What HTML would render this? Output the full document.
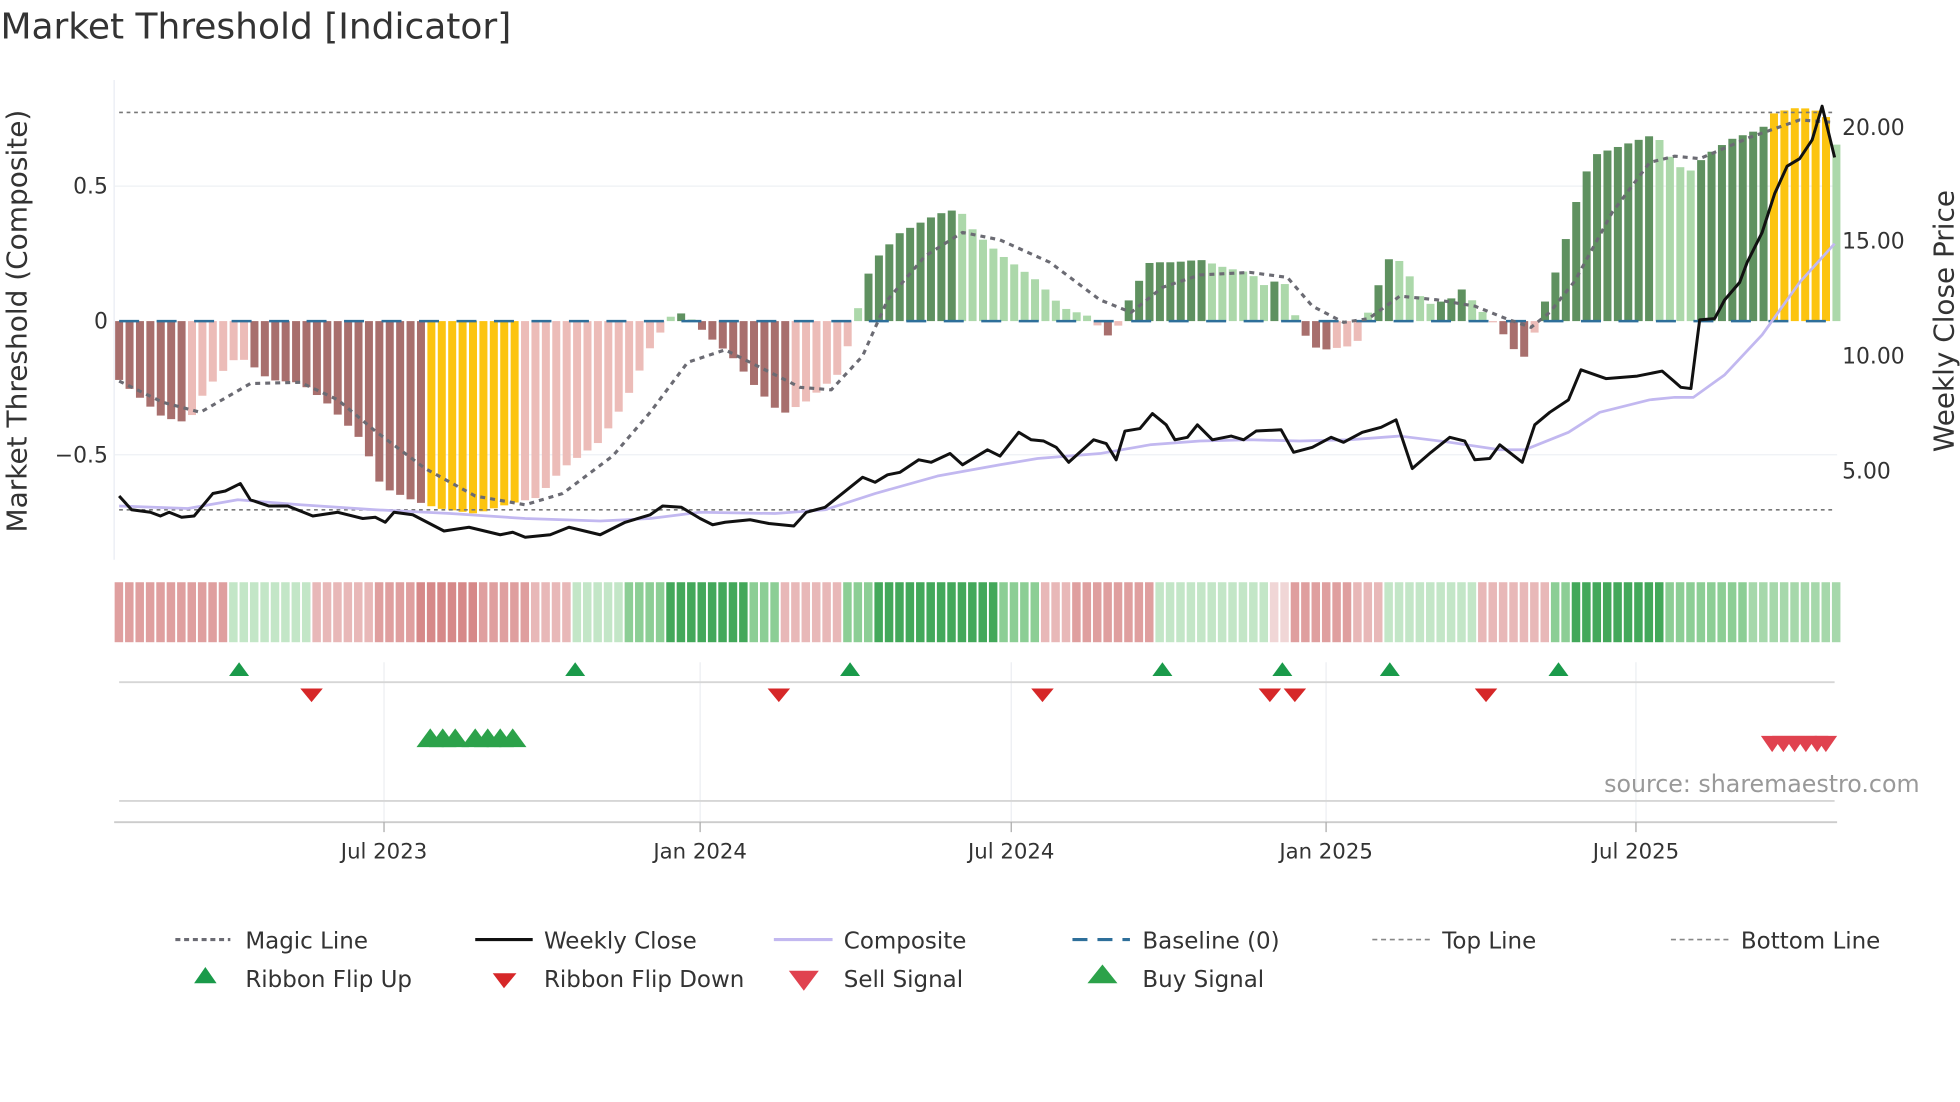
<!DOCTYPE html>
<html><head><meta charset="utf-8"><style>
html,body{margin:0;padding:0;background:#fff;}
svg{display:block;font-family:"DejaVu Sans","Liberation Sans",sans-serif;}
</style></head><body>
<svg id="s" width="1960" height="1102" viewBox="0 0 1568 882" xmlns="http://www.w3.org/2000/svg">
<rect width="1568" height="882" fill="#fff"/>
<text x="0" y="31" font-size="28.8" fill="#333">Market Threshold [Indicator]</text>
<line x1="91" y1="64" x2="91" y2="448" stroke="#e8ecf3" stroke-width="1"/>
<line x1="91" y1="149" x2="1470" y2="149" stroke="#eef0f4"/>
<line x1="91" y1="364" x2="1470" y2="364" stroke="#eef0f4"/>
<g id="bars"></g>
<line x1="95" y1="90" x2="1468" y2="90" stroke="#777" stroke-width="1.3" stroke-dasharray="3,3"/>
<line x1="95" y1="408" x2="1468" y2="408" stroke="#777" stroke-width="1.3" stroke-dasharray="3,3"/>
<line x1="95" y1="257" x2="1468" y2="257" stroke="#2e6f9a" stroke-width="2" stroke-dasharray="16,14"/>
<g id="lines"></g>
<g font-size="17.5" fill="#333">
<text x="86" y="155" text-anchor="end">0.5</text>
<text x="86" y="263" text-anchor="end">0</text>
<text x="86" y="370" text-anchor="end">−0.5</text>
<text x="1474" y="108">20.00</text>
<text x="1474" y="199">15.00</text>
<text x="1474" y="291">10.00</text>
<text x="1474" y="383">5.00</text>
</g>
<text transform="translate(21,257) rotate(-90)" font-size="22.4" fill="#333" text-anchor="middle">Market Threshold (Composite)</text>
<text transform="translate(1563,257) rotate(-90)" font-size="22.3" fill="#333" text-anchor="middle">Weekly Close Price</text>
<g id="ribbon"></g>
<g stroke="#eceef2" stroke-width="1">
<line x1="307" y1="530" x2="307" y2="658"/><line x1="560" y1="530" x2="560" y2="658"/><line x1="809" y1="530" x2="809" y2="658"/><line x1="1061" y1="530" x2="1061" y2="658"/><line x1="1309" y1="530" x2="1309" y2="658"/>
</g>
<line x1="95" y1="546" x2="1468" y2="546" stroke="#d6d6d6" stroke-width="1.5"/>
<line x1="95" y1="641" x2="1468" y2="641" stroke="#d6d6d6" stroke-width="1.5"/>
<line x1="91" y1="658" x2="1470" y2="658" stroke="#ccc" stroke-width="1.5"/>
<g stroke="#aaa"><line x1="307" y1="658" x2="307" y2="666"/><line x1="560" y1="658" x2="560" y2="666"/><line x1="809" y1="658" x2="809" y2="666"/><line x1="1061" y1="658" x2="1061" y2="666"/><line x1="1309" y1="658" x2="1309" y2="666"/></g>
<g id="sig"></g>
<text x="1536" y="634" font-size="19" fill="#999" text-anchor="end">source: sharemaestro.com</text>
<g font-size="17" fill="#333" text-anchor="middle">
<text x="307" y="687">Jul 2023</text><text x="560" y="687">Jan 2024</text><text x="809" y="687">Jul 2024</text><text x="1061" y="687">Jan 2025</text><text x="1309" y="687">Jul 2025</text>
</g>
<g font-size="18.4" fill="#333">
<line x1="140" y1="752" x2="184" y2="752" stroke="#6b6b73" stroke-width="2.5" stroke-dasharray="4,3"/><text x="196" y="759">Magic Line</text>
<line x1="380" y1="752" x2="426" y2="752" stroke="#111" stroke-width="2.5"/><text x="435" y="759">Weekly Close</text>
<line x1="619" y1="752" x2="666" y2="752" stroke="#c2b8f0" stroke-width="2.5"/><text x="675" y="759">Composite</text>
<line x1="858" y1="752" x2="904" y2="752" stroke="#2e6f9a" stroke-width="2.5" stroke-dasharray="12,8"/><text x="914" y="759">Baseline (0)</text>
<line x1="1098" y1="752" x2="1144" y2="752" stroke="#888" stroke-width="1.3" stroke-dasharray="4,3"/><text x="1154" y="759">Top Line</text>
<line x1="1337" y1="752" x2="1383" y2="752" stroke="#888" stroke-width="1.3" stroke-dasharray="4,3"/><text x="1393" y="759">Bottom Line</text>
<polygon points="164,774 173,787 155,787" fill="#1a9a4a"/><text x="196" y="790">Ribbon Flip Up</text>
<polygon points="394,779 413,779 403,791" fill="#d62728"/><text x="435" y="790">Ribbon Flip Down</text>
<polygon points="631,777 655,777 643,793" fill="#e0424f"/><text x="675" y="790">Sell Signal</text>
<polygon points="882,772 894,787 870,787" fill="#2ca24a"/><text x="914" y="790">Buy Signal</text>
</g>
</svg>
<script>
(function(){
var NS="http://www.w3.org/2000/svg";
function el(p,t,a){var e=document.createElementNS(NS,t);for(var k in a)e.setAttribute(k,a[k]);p.appendChild(e);return e;}
function interp(pts,x){if(x<=pts[0][0])return pts[0][1];for(var i=1;i<pts.length;i++){if(x<=pts[i][0]){var a=pts[i-1],b=pts[i];return a[1]+(b[1]-a[1])*(x-a[0])/(b[0]-a[0]);}}return pts[pts.length-1][1];}
var H=[[95,-0.22],[130,-0.36],[150,-0.38],[165,-0.25],[190,-0.13],[200,-0.16],[215,-0.22],[240,-0.23],[260,-0.3],[290,-0.45],[305,-0.62],[330,-0.67],[350,-0.7],[380,-0.72],[410,-0.68],[430,-0.66],[450,-0.55],[480,-0.45],[500,-0.3],[520,-0.1],[530,-0.03],[537,0.02],[546,0.03],[555,0],[565,-0.05],[585,-0.13],[605,-0.25],[625,-0.35],[645,-0.3],[670,-0.2],[683,-0.03],[690,0.13],[700,0.23],[720,0.33],[750,0.4],[767,0.42],[780,0.33],[800,0.25],[830,0.15],[850,0.05],[870,0.02],[890,-0.07],[905,0.1],[920,0.22],[940,0.22],[960,0.23],[980,0.2],[1000,0.18],[1015,0.12],[1025,0.18],[1040,-0.03],[1055,-0.11],[1085,-0.09],[1100,0.1],[1112,0.24],[1122,0.22],[1140,0.06],[1160,0.08],[1170,0.12],[1185,0.04],[1200,-0.03],[1218,-0.15],[1230,-0.02],[1238,0.1],[1246,0.2],[1255,0.34],[1265,0.51],[1275,0.62],[1300,0.66],[1325,0.7],[1335,0.62],[1350,0.55],[1365,0.62],[1385,0.68],[1410,0.72],[1420,0.78],[1440,0.8],[1460,0.78],[1468,0.66]];
var bars=document.getElementById('bars'),rib=document.getElementById('ribbon');
var prev=0;
var R=[[92,'r2'],[185,'g1'],[245,'r1'],[300,'r2'],[330,'r3'],[380,'r2'],[420,'r1'],[455,'g1'],[500,'g2'],[530,'g3'],[600,'g2'],[620,'r1'],[677,'g2'],[700,'g3'],[800,'g2'],[830,'r1'],[860,'r2'],[925,'g1'],[1013,'r0'],[1030,'r2'],[1080,'r1'],[1107,'g1'],[1185,'r1'],[1242,'g2'],[1260,'g3'],[1330,'g2'],[1400,'g1b']];
var C={r0:'#f0d6d6',r1:'#e8b8b8',r2:'#df9f9f',r3:'#d68888',g1:'#c3e6c7',g1b:'#a6d8ab',g2:'#8cce95',g3:'#43a85a'};
for(var i=0;i<166;i++){
 var x=95+i*8.33;var v=interp(H,x);
 var dark=Math.abs(v)>=Math.abs(prev);prev=v;
 var col;
 if((x>338&&x<416)||(x>1413&&x<1462))col='#fcc410';
 else if(v<0)col=dark?'#a86f6d':'#ecbcb8';else col=dark?'#5f9160':'#acd8aa';
 var y0=257,y1=257-v*214;
 el(bars,'rect',{x:x-3.2,y:Math.min(y0,y1),width:6.4,height:Math.abs(y1-y0),fill:col});
 var c='r1';for(var j=0;j<R.length;j++)if(x>=R[j][0])c=R[j][1];
 el(rib,'rect',{x:x-3.6,y:466,width:6.8,height:48,fill:C[c]});
}
function path(pts,attrs){var d='M'+pts.map(function(p){return p[0]+','+p[1]}).join(' L');attrs.d=d;attrs.fill='none';attrs['stroke-linejoin']='round';el(document.getElementById('lines'),'path',attrs);}
var M=[[95,305],[130,322],[160,330],[200,307],[240,306],[270,320],[300,345],[340,375],[380,397],[420,404],[450,395],[490,365],[520,330],[550,290],[580,280],[610,295],[640,310],[665,312],[690,285],[710,240],[740,205],[770,186],[800,192],[840,210],[880,240],[905,250],[930,230],[960,220],[1000,218],[1030,222],[1050,245],[1075,258],[1095,255],[1120,237],[1150,240],[1180,245],[1205,255],[1225,262],[1240,250],[1260,225],[1290,170],[1320,130],[1340,125],[1360,127],[1400,110],[1440,96],[1468,98]];
var P=[[95,405],[150,407],[190,400],[240,404],[300,408],[360,411],[420,415],[480,417],[520,415],[560,410],[620,411],[660,408],[700,395],[750,381],[800,372],[830,367],[880,363],[920,356],[960,353],[1000,352],[1040,353],[1080,352],[1120,349],[1160,354],[1200,360],[1220,360],[1255,346],[1280,330],[1320,320],[1340,318],[1355,318],[1380,300],[1410,268],[1440,226],[1468,195]];
var W=[[95,397],[105,408],[120,410],[128,413],[135,410],[145,414],[155,413],[170,395],[180,393],[192,387],[200,400],[215,405],[230,405],[250,413],[270,410],[290,415],[300,414],[308,418],[315,410],[330,412],[355,425],[375,422],[400,428],[410,426],[420,430],[440,428],[455,422],[480,428],[500,418],[520,412],[530,405],[545,406],[560,415],[570,420],[580,418],[600,416],[615,419],[635,421],[645,410],[660,406],[670,398],[690,382],[700,386],[710,380],[720,378],[735,368],[745,370],[760,363],[770,372],[790,360],[800,365],[815,346],[825,352],[835,353],[845,358],[855,370],[875,352],[885,355],[893,368],[900,345],[912,343],[922,331],[933,340],[940,352],[950,350],[958,340],[970,352],[985,349],[995,352],[1005,345],[1025,344],[1035,362],[1050,358],[1065,350],[1075,354],[1090,346],[1105,342],[1117,336],[1130,375],[1145,362],[1160,350],[1172,353],[1180,368],[1192,367],[1200,356],[1218,370],[1228,340],[1240,330],[1255,320],[1265,296],[1285,303],[1310,301],[1330,297],[1337,303],[1345,310],[1353,311],[1360,256],[1372,255],[1380,240],[1392,226],[1398,210],[1410,186],[1420,155],[1430,133],[1440,127],[1450,112],[1458,85],[1468,126]];
path(P,{stroke:'#c2b8f0','stroke-width':2.2});
path(M,{stroke:'#6b6b73','stroke-width':2.5,'stroke-dasharray':'4,4'});
path(W,{stroke:'#111','stroke-width':2.4});
var sg=document.getElementById('sig');
[191,460,680,930,1026,1112,1247].forEach(function(x){el(sg,'polygon',{points:(x)+',530 '+(x+8)+',541 '+(x-8)+',541',fill:'#1a9a4a'});});
[249,623,834,1016,1036,1189].forEach(function(x){el(sg,'polygon',{points:(x-9)+',551 '+(x+9)+',551 '+x+',562',fill:'#d62728'});});
[344,354,364,380,390,400,410].forEach(function(x){el(sg,'polygon',{points:x+',583 '+(x+11)+',598 '+(x-11)+',598',fill:'#2ca24a'});});
[1418,1427,1436,1445,1454,1461].forEach(function(x){el(sg,'polygon',{points:(x-9)+',589 '+(x+9)+',589 '+x+',602',fill:'#e0424f'});});
})();
</script>
</body></html>
